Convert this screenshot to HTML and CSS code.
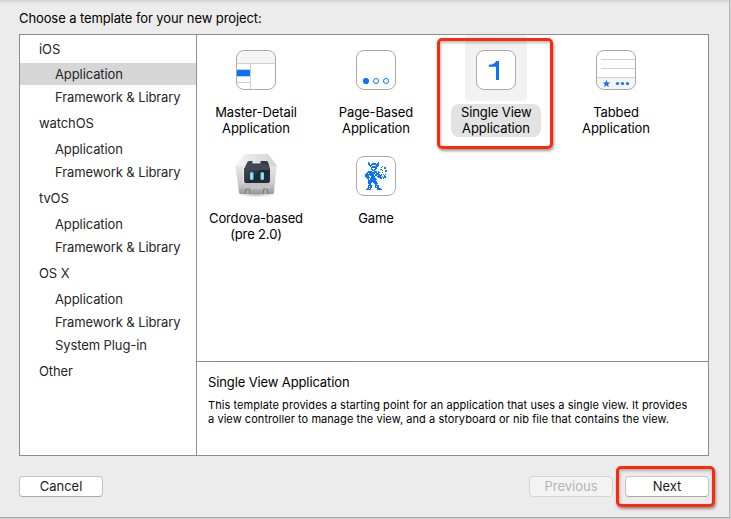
FILE: index.html
```
<!DOCTYPE html>
<html lang="en">
<head>
<meta charset="utf-8">
<title>New Project</title>
<link rel="stylesheet" href="styles.css">
</head>
<body>
<main class="dialog">
  <h1 class="heading">Choose a template for your new project:</h1>
  <div class="panel">
    <nav class="sidebar">
      <div class="group">iOS</div>
      <div class="item selected">Application</div>
      <div class="item">Framework &amp; Library</div>
      <div class="group">watchOS</div>
      <div class="item">Application</div>
      <div class="item">Framework &amp; Library</div>
      <div class="group">tvOS</div>
      <div class="item">Application</div>
      <div class="item">Framework &amp; Library</div>
      <div class="group">OS X</div>
      <div class="item">Application</div>
      <div class="item">Framework &amp; Library</div>
      <div class="item">System Plug-in</div>
      <div class="group">Other</div>
    </nav>
    <section class="content">
      <div class="templates">
        <div class="template">
          <div class="icon"><svg width="40" height="40" viewBox="0 0 40 40">
            <rect x=".5" y=".5" width="39" height="39" rx="7.5" fill="#fff"/>
            <path d="M1 13V8a7 7 0 0 1 7-7h24a7 7 0 0 1 7 7v5z" fill="#f5f5f5"/>
            <path d="M1 13.5h38M14.500 14v25M1 19.500h13M1 26.500h13M1 32.500h13" stroke="#d0d0d0" fill="none"/>
            <rect x="1" y="20" width="13" height="6" fill="#0a73fa"/>
            <rect x=".5" y=".5" width="39" height="39" rx="7.5" fill="none" stroke="#aaa"/>
          </svg></div>
          <div class="label">Master-Detail<br>Application</div>
        </div>
        <div class="template">
          <div class="icon"><svg width="40" height="40" viewBox="0 0 40 40">
            <rect x=".5" y=".5" width="39" height="39" rx="7.5" fill="#fff" stroke="#aaa"/>
            <circle cx="10" cy="31" r="3.100" fill="#0a73fa"/>
            <circle cx="20" cy="31" r="2.500" fill="none" stroke="#0a73fa"/>
            <circle cx="30" cy="31" r="2.500" fill="none" stroke="#0a73fa"/>
          </svg></div>
          <div class="label">Page-Based<br>Application</div>
        </div>
        <div class="template chosen">
          <div class="icon"><svg width="40" height="40" viewBox="0 0 40 40">
            <rect x=".5" y=".5" width="39" height="39" rx="7.5" fill="#fff" stroke="#aaa"/>
            <path d="M12.800 14.800C16.500 14.500 19.300 13.500 20.300 11H23v19h-3V16.800h-7.200z" fill="#0a73fa"/>
          </svg></div>
          <div class="label">Single View<br>Application</div>
          <div class="callout callout-template"></div>
        </div>
        <div class="template">
          <div class="icon"><svg width="40" height="40" viewBox="0 0 40 40">
            <rect x=".5" y=".5" width="39" height="39" rx="7.5" fill="#fff"/>
            <path d="M1 27h38v5a7 7 0 0 1-7 7H8a7 7 0 0 1-7-7z" fill="#f5f5f5"/>
            <path d="M5 9.500h34M5 18.500h34M1 27.500h38" stroke="#d0d0d0"/>
            <path d="M10.500 29.800l1 2.700h2.800l-2.200 1.800.8 2.700-2.400-1.600L8.100 37l.8-2.700-2.200-1.800h2.800z" fill="#0a73fa"/>
            <circle cx="21.500" cy="33.500" r="1.600" fill="#0a73fa"/>
            <circle cx="26.500" cy="33.500" r="1.600" fill="#0a73fa"/>
            <circle cx="31.500" cy="33.500" r="1.600" fill="#0a73fa"/>
            <rect x=".5" y=".5" width="39" height="39" rx="7.5" fill="none" stroke="#aaa"/>
          </svg></div>
          <div class="label">Tabbed<br>Application</div>
        </div>
        <div class="template">
          <div class="icon"><svg class="cordova" width="44" height="46" viewBox="0 0 44 46">
            <defs>
              <linearGradient id="front" x1="0" y1="0" x2="0" y2="1"><stop offset="0" stop-color="#e6e6e6"/><stop offset=".65" stop-color="#cacaca"/><stop offset="1" stop-color="#969696"/></linearGradient>
              <linearGradient id="top" x1="0" y1="0" x2="1" y2="0"><stop offset="0" stop-color="#f5f5f5"/><stop offset="1" stop-color="#d2d2d2"/></linearGradient>
              <linearGradient id="face" x1="0" y1="0" x2="1" y2="1"><stop offset="0" stop-color="#46505a"/><stop offset=".5" stop-color="#303844"/><stop offset=".55" stop-color="#202731"/><stop offset="1" stop-color="#28303b"/></linearGradient>
              <radialGradient id="shade"><stop offset="0" stop-color="#666" stop-opacity=".7"/><stop offset="1" stop-color="#999" stop-opacity="0"/></radialGradient>
            </defs>
            <ellipse cx="22.500" cy="40.500" rx="20" ry="4" fill="url(#shade)"/>
            <path d="M11 1h23l8.500 11v4H1.500v-4z" fill="url(#top)"/>
            <path d="M1.500 13h8v17h26V13h7L40 39.500q-.3 1.500-2 1.500H7q-1.700 0-2-1.500z" fill="url(#front)"/>
            <path d="M10 29h26v7H10z" fill="#c2c2c2"/>
            <path d="M13 10q.3-2 2-2h3.500v2.500h8V8h6q1.500 0 1.800 2l1.700 6v12q-.2 2-2 2H12q-1.800 0-2-2V16z" fill="url(#face)"/>
            <path d="M10 17l2.500-5.500h21.500l2 5.500z" fill="#414a54"/>
            <rect x="16" y="19" width="3.500" height="8" rx="1.500" fill="#64d7ed"/>
            <rect x="26.500" y="19" width="3.500" height="8" rx="1.500" fill="#64d7ed"/>
            <path d="M17.750 20v6M28.250 20v6" stroke="#b9f5ff"/>
            <path d="M11.500 41v-5h4v5M29.500 41v-5h4v5" fill="#aaa" stroke="#7c7c7c"/>
          </svg></div>
          <div class="label tight">Cordova-based<br>(pre 2.0)</div>
        </div>
        <div class="template">
          <div class="icon"><svg width="40" height="40" viewBox="0 0 40 40">
            <rect x=".5" y=".5" width="39" height="39" rx="7.5" fill="#fff" stroke="#aaa"/>
            <g id="sprite" fill="#0a73fa" shape-rendering="crispEdges"></g>
          </svg></div>
          <div class="label">Game</div>
        </div>
      </div>
      <div class="details">
        <h2>Single View Application</h2>
        <p>This template provides a starting point for an application that uses a single view. It provides<br>a view controller to manage the view, and a storyboard or nib file that contains the view.</p>
      </div>
    </section>
  </div>
  <footer class="buttons">
    <button class="cancel">Cancel</button>
    <button disabled>Previous</button>
    <div class="next"><button>Next</button><div class="callout callout-next"></div></div>
  </footer>
</main>
<script src="sprite.js"></script>
</body>
</html>
```
FILE: styles.css
```
* { box-sizing: border-box; }
body {
  margin: 0;
  width: 731px;
  height: 519px;
  overflow: hidden;
  background: #d0d0d0;
  color: #000;
  font: 13px/16px Inter, "Liberation Sans", sans-serif;
  letter-spacing: -.1px;
}
.dialog {
  width: 730px;
  height: 518px;
  padding: 10px 20px 0 19px;
  background: linear-gradient(#d4d4d4, #ececec 4px);
  border-right: 1px solid #b8b8b8;
  border-bottom: 1px solid #aaa;
}
.heading { margin: 0; height: 24px; font-size: 13px; font-weight: 400; white-space: nowrap; }
.panel {
  display: flex;
  width: 690px;
  height: 422px;
  background: #fff;
  border: 1px solid #8e8e8e;
}
.sidebar { width: 177px; border-right: 1px solid #8e8e8e; color: #262626; }
.group { height: 29px; padding: 0 0 0 19px; line-height: 29px; }
.group:first-child { height: 28px; line-height: 28px; }
.item { height: 23px; padding-left: 35px; line-height: 23px; }
.selected { height: 22px; margin-bottom: 1px; background: #d6d6d6; }
.content { flex: 1; display: flex; flex-direction: column; }
.templates {
  flex: 1;
  display: grid;
  grid-template-columns: repeat(4, 120px);
  grid-auto-rows: 106px;
  margin-left: -1px;
}
.template {
  position: relative;
  display: flex;
  flex-direction: column;
  align-items: center;
  text-align: center;
}
.icon { display: flex; justify-content: center; width: 62px; height: 66px; padding-top: 15px; }
.icon svg { flex: none; }
.cordova { margin-top: -3px; }
.label { margin-top: 3px; padding: 0 10px; height: 33px; border-radius: 8px; white-space: nowrap; }
.tight { letter-spacing: -.15px; }
.chosen .icon { background: #f2f2f2; border-radius: 0 0 3px 3px; }
.chosen .label { background: #e3e3e3; width: 90px; }
.details { height: 94px; padding: 12px 11px; border-top: 1px solid #8e8e8e; }
.details h2 { margin: 0 0 8px; font-size: 13px; font-weight: 400; line-height: 16px; letter-spacing: -.12px; }
.details p { margin: 0; font-size: 11px; line-height: 14px; white-space: nowrap; letter-spacing: .06px; }
.buttons { display: flex; padding-top: 20px; }
button {
  width: 84px;
  height: 21px;
  padding: 0 0 1px;
  border: 1px solid #c4c4c4;
  border-bottom-color: #aaa;
  border-radius: 4px;
  background: #fff;
  color: #1c1c1c;
  font: inherit;
  line-height: 18px;
}
button:disabled { background: #f3f3f3; border-color: #d4d4d4; color: #b4b4b4; }
.cancel { margin-right: 426px; }
.next { position: relative; margin-left: 12px; height: 21px; display: flex; }
.callout {
  position: absolute;
  border: 3px solid #fb2a0c;
  border-radius: 5px;
  box-shadow: 1px 2px 3px rgba(0,0,0,.4), inset 1px 2px 3px rgba(0,0,0,.25);
}
.callout-template { left: 1px; top: 3px; width: 116px; height: 111px; }
.callout-next { left: -9px; top: -10px; width: 99px; height: 41px; }
```
FILE: sprite.js
```
const rows = [
  "....#.........#.........",
  "....##..####.##.........",
  "....##.########.........",
  ".....###....###.........",
  "......#.######....#.....",
  ".......######....#..##..",
  ".......#...##.......##..",
  ".......##.##....##......",
  "........###.......#..##.",
  "....####..###.#......##.",
  "...##########.##..#.....",
  "..##.######.###.........",
  ".#########.#####.#.#.#..",
  ".####.####.##.####..#...",
  ".####..####..####.#.##..",
  "..####.####...####.###..",
  "...##.######....##.#....",
  "....#.#######...........",
  "....########............",
  "....#########...........",
  "....####.####...........",
  "....###...####..........",
  ".....##....##...........",
  "....####...####.........",
  "....#.##...#.##.........",
  "....####...####.........",
  "...##.#......####.......",
  "..#####......#####......"
];
const sprite = document.getElementById("sprite");
rows.forEach((row, y) => {
  for (const run of row.matchAll(/#+/g)) {
    const r = document.createElementNS("http://www.w3.org/2000/svg", "rect");
    r.setAttribute("x", 8 + run.index);
    r.setAttribute("y", 6 + y);
    r.setAttribute("width", run[0].length);
    r.setAttribute("height", 1);
    sprite.append(r);
  }
});
```
